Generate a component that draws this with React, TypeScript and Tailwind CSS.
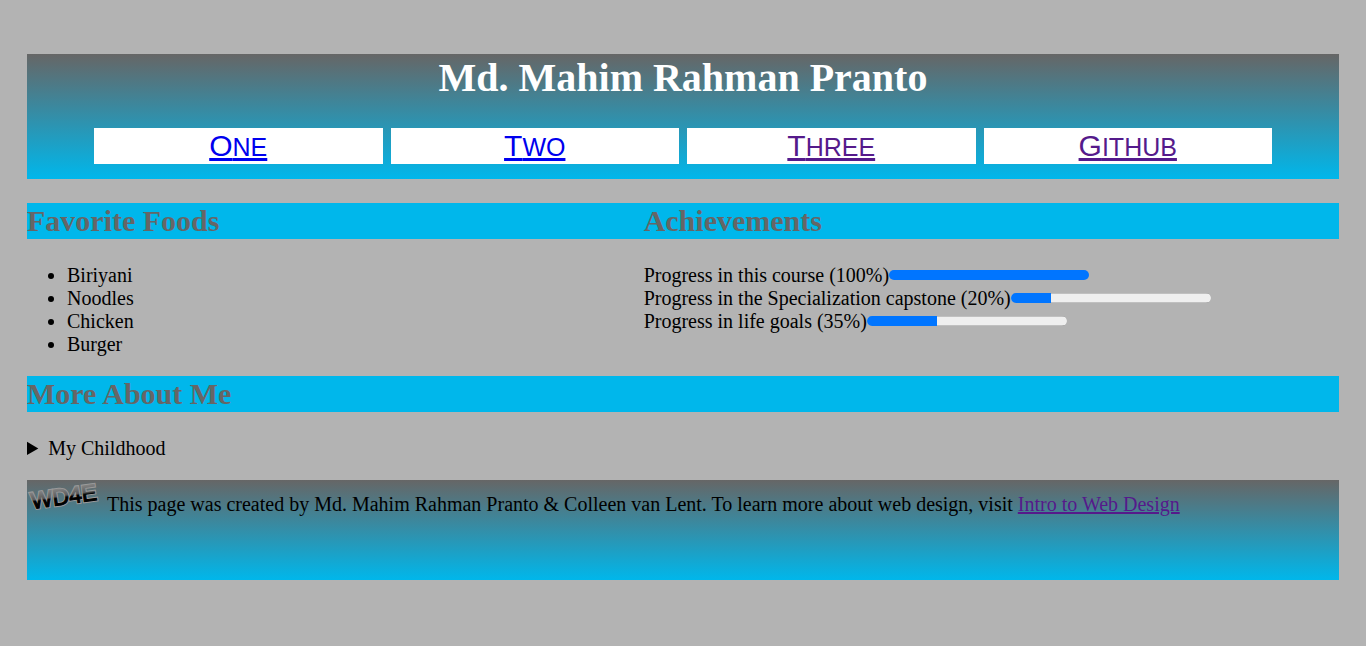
const links = [
  { label: "One", href: "#one", color: "text-[#0000ee]" },
  { label: "Two", href: "#two", color: "text-[#0000ee]" },
  { label: "Three", href: "#three", color: "text-[#551a8b]" },
  { label: "Github", href: "#github", color: "text-[#551a8b]" },
];

const foods = ["Biriyani", "Noodles", "Chicken", "Burger"];

const goals = [
  { id: "course", label: "Progress in this course (100%)", value: 100 },
  { id: "capstone", label: "Progress in the Specialization capstone (20%)", value: 20 },
  { id: "life", label: "Progress in life goals (35%)", value: 35 },
];

const heading = "bg-[#00b7eb] text-[30px] leading-9 font-bold text-[#666666]";
const banner = "bg-linear-to-b/srgb from-[#666666] to-[#00b7eb]";

function Logo() {
  return (
    <svg viewBox="0 0 72 34" className="h-[34px] w-[72px] shrink-0 overflow-visible" role="img" aria-label="WD4E">
      <defs>
        <linearGradient id="metal" x1="0" y1="0" x2="0" y2="1">
          <stop offset="0.2" stopColor="#808080" />
          <stop offset="0.46" stopColor="#5c5c5c" />
          <stop offset="0.54" stopColor="#000000" />
        </linearGradient>
      </defs>
      <text
        x="5"
        y="29"
        transform="rotate(-8 5 29)"
        fontFamily="Liberation Sans"
        fontSize="23"
        fill="none"
        stroke="#999999"
        strokeWidth="3"
        aria-hidden="true"
      >
        WD4E
      </text>
      <text
        x="5"
        y="29"
        transform="rotate(-8 5 29)"
        fontFamily="Liberation Sans"
        fontSize="23"
        fill="url(#metal)"
        stroke="url(#metal)"
        strokeWidth="1"
      >
        WD4E
      </text>
    </svg>
  );
}

export default function App() {
  return (
    <div className="min-h-screen bg-[#b3b3b3] px-[27px] pt-[54px] pb-[66px] font-['Liberation_Serif',serif] text-[20px] leading-[23px] text-black">
      <header className={`${banner} pb-[15px]`}>
        <h1 className="text-center text-[40px] leading-[48px] font-bold text-white">Md. Mahim Rahman Pranto</h1>
        <nav className="mx-[67px] mt-[26px] grid grid-cols-4 gap-2">
          {links.map((l) => (
            <a key={l.label} href={l.href} className={`block h-9 bg-white text-center font-['Liberation_Sans',sans-serif] text-[25px] leading-9 uppercase underline decoration-3 underline-offset-2 first-letter:text-[30px] first-letter:leading-9 ${l.color}`}>
              {l.label}
            </a>
          ))}
        </nav>
      </header>
      <main>
        <div className="mt-6 grid grid-cols-[47%_53%]">
          <section>
            <h2 className={heading}>Favorite Foods</h2>
            <ul className="mt-[25px] list-disc pl-10">
              {foods.map((f) => <li key={f}>{f}</li>)}
            </ul>
          </section>
          <section>
            <h2 className={heading}>Achievements</h2>
            <div className="mt-[25px]">
              {goals.map((g) => (
                <div key={g.id} className="flex items-center">
                  <label htmlFor={g.id}>{g.label}</label>
                  <progress
                    id={g.id}
                    max={100}
                    value={g.value}
                    className="mb-0.5 h-[10px] w-[200px] appearance-none overflow-hidden rounded-full [&::-webkit-progress-bar]:bg-[linear-gradient(#c0c0c0_1px,#efefef_1px,#efefef_9px,#c0c0c0_9px)] [&::-webkit-progress-value]:bg-[#0075ff]"
                  />
                </div>
              ))}
            </div>
          </section>
        </div>
        <section className="mt-5">
          <h2 className={heading}>More About Me</h2>
          <details className="mt-[25px]">
            <summary>My Childhood</summary>
            <p>I grew up in Bangladesh.</p>
          </details>
        </section>
      </main>
      <footer className={`${banner} mt-5 flex min-h-[100px] items-start`}>
        <Logo />
        <p className="mt-[13px] ml-2">
          This page was created by Md. Mahim Rahman Pranto &amp; Colleen van Lent. To learn more about web design, visit{" "}
          <a href="#intro" className="text-[#551a8b] underline">Intro to Web Design</a>
        </p>
      </footer>
    </div>
  );
}
